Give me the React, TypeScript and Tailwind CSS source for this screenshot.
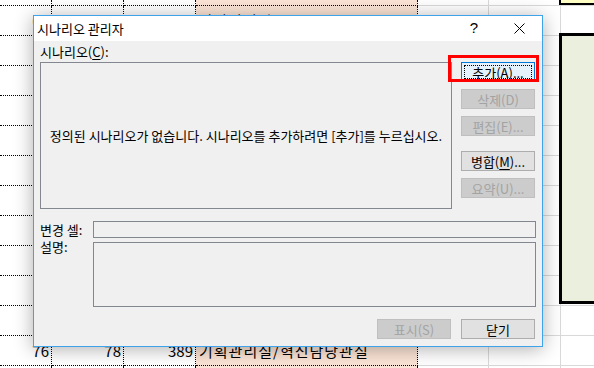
import React from 'react';

const ko = "font-['Noto_Sans_CJK_KR','Malgun_Gothic',sans-serif]";

type Kind = 'dot' | 'peach' | 'grid' | 'last';

const kindClass: Record<Kind, string> = {
  dot: 'border-r border-b border-dotted border-black',
  peach: 'border-r border-b border-dotted border-black bg-[#fbe4d5]',
  grid: 'border-r border-b border-[#d9d9d9]',
  last: 'border-b border-[#d9d9d9]',
};

const kinds: Kind[] = ['dot', 'dot', 'dot', 'peach', 'grid', 'grid', 'last'];

const rows: { h: string; cells?: string[] }[] = [
  { h: 'h-[5px]' },
  { h: 'h-[30px]', cells: ['65', '67', '378', '감사담당관'] },
  ...Array.from({ length: 10 }, () => ({ h: 'h-[30px]' })),
  { h: 'h-[30px]', cells: ['76', '78', '389', '기획관리실/혁신담당관실'] },
  { h: 'h-[30px]' },
];

const Sheet = () => (
  <div className="grid grid-cols-[52px_72px_72px_222px_71px_72px_1fr]">
    {rows.map((row, r) =>
      kinds.map((k, c) => (
        <div
          key={`${r}-${c}`}
          className={`${row.h} ${kindClass[k]} flex items-end overflow-hidden whitespace-nowrap pb-[5px] text-[15px] leading-[19px] text-black ${
            c < 3 ? 'justify-end pr-[2px]' : 'justify-start pl-[3px] tracking-[1px]'
          }`}
        >
          {row.cells?.[c] ?? ''}
        </div>
      ))
    )}
  </div>
);

const Btn = ({
  children,
  disabled,
  focused,
}: {
  children: React.ReactNode;
  disabled?: boolean;
  focused?: boolean;
}) => {
  let cls = 'bg-[#e1e1e1] border-[#adadad] text-black';
  if (disabled) cls = 'bg-[#cccccc] border-[#bfbfbf] text-[#a3a3a3]';
  if (focused) cls = 'bg-[#e5f1fb] border-[#0078d7] text-black';
  return (
    <div
      className={`relative flex h-[20px] w-[74px] items-center justify-center border text-[13px] leading-none ${cls}`}
    >
      {focused && <div className="absolute inset-[2px] border border-dotted border-black" />}
      <span className="relative">{children}</span>
    </div>
  );
};

const Dialog = () => (
  <div
    className={`absolute left-[33px] top-[15px] w-[510px] border border-[#3ea3ea] bg-white shadow-[0_2px_18px_rgba(0,0,0,0.32)] ${ko}`}
  >
    <div className="flex h-[25px] items-center bg-white">
      <span className="pl-[3px] text-[13px] text-black">시나리오 관리자</span>
      <div className="ml-auto flex h-full">
        <div className="flex w-[44px] items-center justify-center font-['Liberation_Sans',sans-serif] text-[15px] text-black">
          ?
        </div>
        <div className="flex w-[46px] items-center justify-center">
          <svg width="11" height="11" viewBox="0 0 11 11">
            <path d="M0.5 0.5 L10.5 10.5 M10.5 0.5 L0.5 10.5" stroke="#000" strokeWidth="1" fill="none" />
          </svg>
        </div>
      </div>
    </div>

    <div className="bg-[#f0f0f0] px-[6px] pb-[7px] pt-[3px] text-[13px] text-black">
      <div className="h-[16px] leading-[16px]">
        시나리오(<span className="underline underline-offset-2">C</span>):
      </div>

      <div className="mt-[2px] flex gap-[9px]">
        <div className="flex h-[147px] w-[412px] items-center justify-center whitespace-nowrap border border-[#828790] bg-[#f0f0f0]">
          정의된 시나리오가 없습니다. 시나리오를 추가하려면 [추가]를 누르십시오.
        </div>
        <div className="relative flex w-[74px] flex-col">
          <Btn focused>추가(A)...</Btn>
          <div className="mt-[7px]">
            <Btn disabled>삭제(D)</Btn>
          </div>
          <div className="mt-[7px]">
            <Btn disabled>편집(E)...</Btn>
          </div>
          <div className="mt-[15px]">
            <Btn>
              병합(<span className="underline underline-offset-2">M</span>)...
            </Btn>
          </div>
          <div className="mt-[7px]">
            <Btn disabled>요약(U)...</Btn>
          </div>
          <div className="absolute left-[-13px] top-[-7px] h-[27px] w-[91px] border-[3px] border-[#ff0000]" />
        </div>
      </div>

      <div className="mt-[12px] flex items-center">
        <div className="w-[53px] leading-[16px]">변경 셀:</div>
        <div className="h-[17px] w-[443px] border border-[#828790]" />
      </div>

      <div className="mt-[4px] flex items-start">
        <div className="-mt-[3px] w-[53px] leading-[16px]">설명:</div>
        <div className="h-[65px] w-[443px] border border-[#828790]" />
      </div>

      <div className="mt-[12px] flex justify-end gap-[10px] pr-[1px]">
        <Btn disabled>표시(S)</Btn>
        <Btn>닫기</Btn>
      </div>
    </div>
  </div>
);

export default function App() {
  return (
    <div className={`relative h-[368px] w-[594px] overflow-hidden bg-white ${ko}`}>
      <Sheet />
      <div className="absolute left-[559px] top-[-20px] h-[25px] w-[60px] border-2 border-black bg-[#ffffc4]" />
      <div className="absolute left-[559px] top-[33px] h-[271px] w-[60px] border-[3px] border-black bg-[#ebf0de]" />
      <Dialog />
    </div>
  );
}
